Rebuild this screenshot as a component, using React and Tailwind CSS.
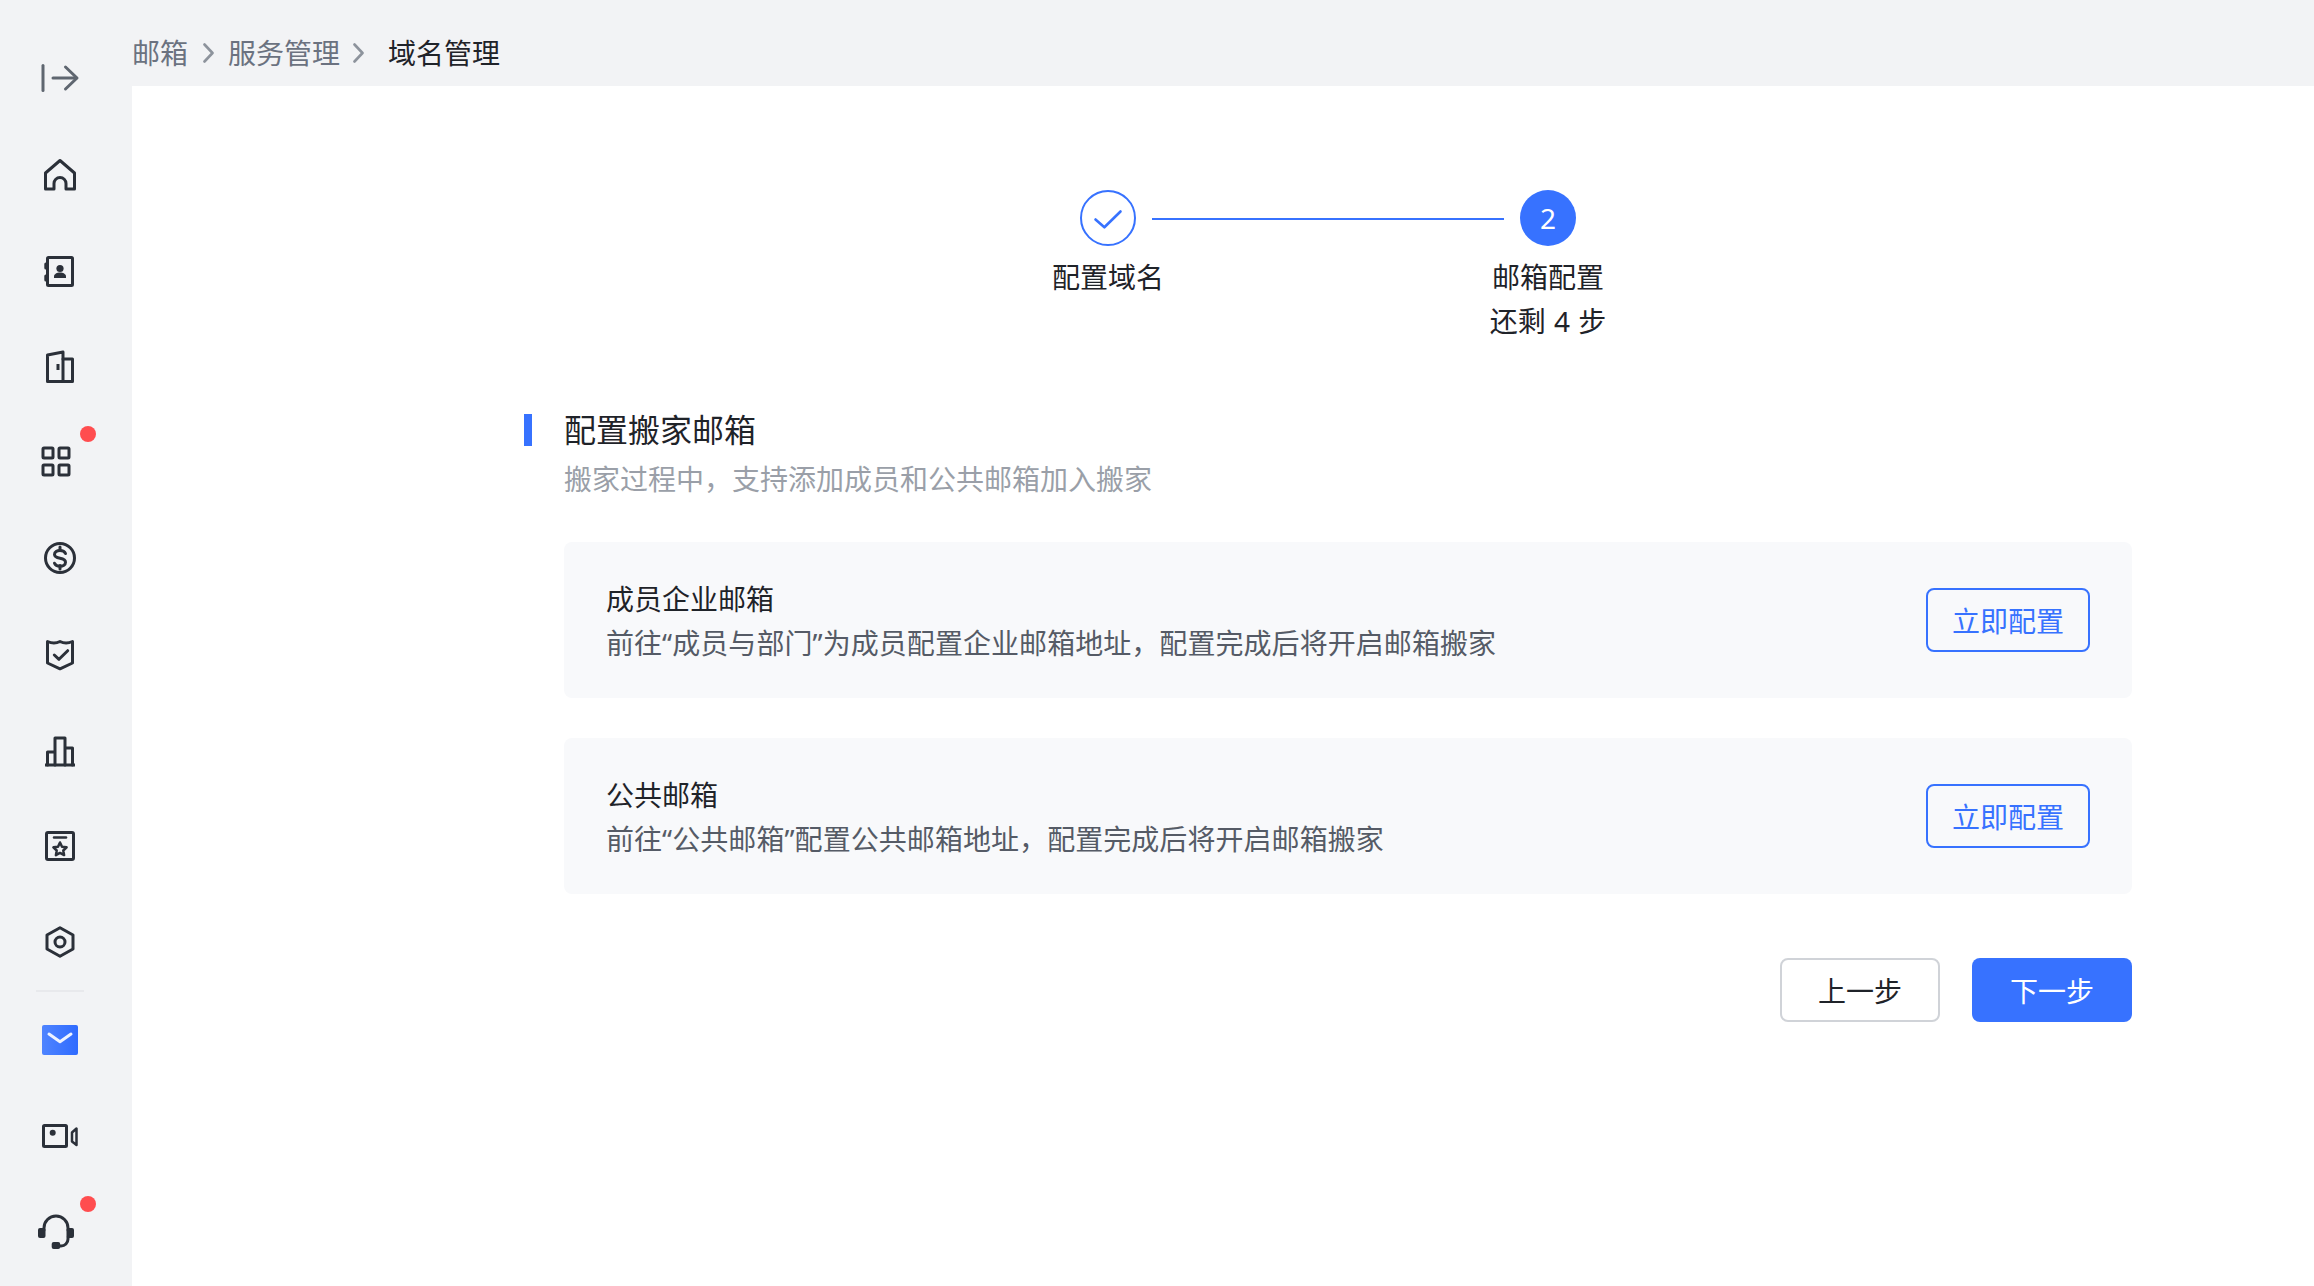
const stroke = {
  fill: "none",
  stroke: "#2b3039",
  strokeWidth: 3,
  strokeLinejoin: "round",
  strokeLinecap: "round",
};

function Ico({ children }) {
  return (
    <svg width="48" height="48" viewBox="0 0 48 48" className="block" {...stroke}>
      {children}
    </svg>
  );
}

const icons = {
  collapse: (
    <svg width="48" height="48" viewBox="0 0 48 48" className="block" fill="none" stroke="#5f6670" strokeWidth="3" strokeLinecap="round" strokeLinejoin="round">
      <path d="M7 11.500V36.500" />
      <path d="M17 24H40" />
      <path d="M29.500 13L41 24L29.500 35" />
    </svg>
  ),
  home: (
    <Ico>
      <path d="M9.500 23L24 10.500L38.500 23V39H30V33.500a6 6 0 0 0-12 0V39H9.500Z" />
    </Ico>
  ),
  contacts: (
    <Ico>
      <rect x="11.500" y="11.500" width="25" height="28" rx="1" />
      <path d="M9.800 18v4M9.800 30v4" />
      <circle cx="24" cy="22.500" r="3.600" fill="#2b3039" stroke="none" />
      <path d="M18 32v-1.500c0-2.500 3-4 6-4s6 1.500 6 4V32Z" fill="#2b3039" stroke="none" />
    </Ico>
  ),
  door: (
    <Ico>
      <path d="M11.500 13L27 10V39.500H11.500Z" />
      <path d="M27 17H36.500V39.500H27" />
      <rect x="20.500" y="22" width="3" height="6" fill="#2b3039" stroke="none" />
    </Ico>
  ),
  grid: (
    <Ico>
      <rect x="7" y="10" width="10" height="10" rx="1" />
      <rect x="23" y="10" width="10" height="10" rx="1" />
      <rect x="7" y="27" width="10" height="10" rx="1" />
      <rect x="23" y="27" width="10" height="10" rx="1" />
    </Ico>
  ),
  dollar: (
    <Ico>
      <circle cx="24" cy="24" r="14.500" />
      <path d="M29.500 19.500c-.8-2-2.800-3-5.500-3-3 0-5.500 1.500-5.500 4 0 2.700 2.500 3.200 5.500 3.700s5.500 1.300 5.500 4c0 2.600-2.500 4-5.500 4-2.700 0-4.700-1-5.500-3" />
      <path d="M24 13v3.500M24 31.500V35" />
    </Ico>
  ),
  shield: (
    <Ico>
      <path d="M11.500 11.500C16 13.500 20 13.500 24 11.500C28 13.500 32 13.500 36.500 11.500V33L24 38.800L11.500 33Z" />
      <path d="M18.300 25L23 29.300L31.700 20.700" />
    </Ico>
  ),
  bars: (
    <Ico>
      <path d="M9 39H39" strokeLinecap="butt" />
      <path d="M19 26H11.500V39M19 39V12H29V39M29 22H36.500V39" />
    </Ico>
  ),
  star: (
    <Ico>
      <rect x="10.500" y="10.500" width="27" height="27" rx="1.500" />
      <path d="M18 15.500H30" strokeWidth="2.500" />
      <path d="M24 20.500L26 24.700L30.600 25.300L27.300 28.500L28.100 33.100L24 30.900L19.900 33.100L20.700 28.500L17.400 25.300L22 24.700Z" strokeWidth="2.500" />
    </Ico>
  ),
  hex: (
    <Ico>
      <path d="M24 9.700L37 17V31L24 38.300L11 31V17Z" />
      <circle cx="24" cy="24" r="5" />
    </Ico>
  ),
  video: (
    <Ico>
      <rect x="7.500" y="13.500" width="23" height="21" rx="1" />
      <circle cx="16.700" cy="20.700" r="3" fill="#2b3039" stroke="none" />
      <path d="M36 20.500L40.500 16.500V33L36 29.500Z" strokeWidth="2.500" />
    </Ico>
  ),
  headset: (
    <Ico>
      <path d="M8 22V20a12 12 0 0 1 24 0V22" />
      <rect x="2" y="20" width="7.500" height="10" rx="2" fill="#2b3039" stroke="none" />
      <rect x="30.500" y="20" width="7.500" height="10" rx="2" fill="#2b3039" stroke="none" />
      <path d="M32 29V31a7 7 0 0 1-7 7H22" />
      <rect x="15.700" y="34" width="8.500" height="7" rx="2" fill="#2b3039" stroke="none" />
    </Ico>
  ),
};

function Row({ icon, dot }) {
  return (
    <div className="relative flex h-24 w-[120px] items-center justify-center">
      {icons[icon]}
      {dot && <span className="absolute left-20 top-3 h-4 w-4 rounded-full bg-[#ff4d4f]" />}
    </div>
  );
}

function Chevron({ className }) {
  return (
    <svg width="11" height="20" viewBox="0 0 11 20" className={className} fill="none" stroke="#8d939c" strokeWidth="2.600" strokeLinecap="round" strokeLinejoin="round">
      <path d="M1.500 1.500L9.500 10L1.500 18.500" />
    </svg>
  );
}

function Card({ title, desc }) {
  return (
    <div className="flex h-[156px] items-center justify-between rounded-lg bg-[#f8f9fb] px-[42px]">
      <div className="pt-[1px]">
        <div className="text-[28px] leading-[44px] text-[#1f2329]">{title}</div>
        <div className="text-[28px] leading-[44px] tracking-[0.06px] text-[#555b66]">{desc}</div>
      </div>
      <button className="h-16 w-[164px] rounded-lg border-2 border-[#3772ff] pt-[2px] text-[28px] text-[#3772ff]">立即配置</button>
    </div>
  );
}

export default function App() {
  return (
    <div className="flex h-screen w-screen overflow-hidden bg-[#f2f3f5] font-['Noto_Sans','Noto_Sans_CJK_SC',sans-serif]">
      <aside className="w-[132px] shrink-0 pt-[30px]">
        <Row icon="collapse" />
        <Row icon="home" />
        <Row icon="contacts" />
        <Row icon="door" />
        <Row icon="grid" dot />
        <Row icon="dollar" />
        <Row icon="shield" />
        <Row icon="bars" />
        <Row icon="star" />
        <Row icon="hex" />
        <div className="ml-9 h-[2px] w-12 bg-[#e8e9ec]" />
        <div className="flex h-24 w-[120px] items-center justify-center">
          <svg width="36" height="30" viewBox="0 0 36 30" className="block">
            <defs>
              <linearGradient id="mailg" x1="0" y1="0" x2="1" y2="0">
                <stop offset="0" stopColor="#4f84ff" />
                <stop offset="1" stopColor="#2f6bff" />
              </linearGradient>
            </defs>
            <rect width="36" height="30" rx="2" fill="url(#mailg)" />
            <path d="M7 9L18 16.700L29 9" fill="none" stroke="#eef3ff" strokeWidth="3" strokeLinecap="round" strokeLinejoin="round" />
          </svg>
        </div>
        <Row icon="video" />
        <Row icon="headset" dot />
      </aside>

      <main className="flex min-w-0 flex-1 flex-col">
        <nav className="flex h-[86px] shrink-0 items-start pt-[31px] text-[28px] leading-[44px]">
          <div className="flex h-[44px] items-center text-[#6b7280]">
            <span>邮箱</span>
            <Chevron className="ml-[15px]" />
            <span className="ml-[14px]">服务管理</span>
            <Chevron className="ml-[13px]" />
            <span className="ml-[24px] text-[#1f2329]">域名管理</span>
          </div>
        </nav>

        <section className="flex-1 bg-white pl-[392px] pt-[104px]">
          <div className="w-[1608px]">
            <div className="flex items-center justify-center gap-4">
              <div className="flex h-14 w-14 items-center justify-center rounded-full border-2 border-[#3772ff]">
                <svg width="52" height="52" viewBox="0 0 52 52" fill="none" stroke="#3772ff" strokeWidth="2.600" strokeLinecap="round" strokeLinejoin="round">
                  <path d="M13.500 27.500L22.400 35.300L38.500 19.500" />
                </svg>
              </div>
              <div className="mt-[2px] h-[2px] w-[352px] bg-[#3772ff]" />
              <div className="flex h-14 w-14 items-center justify-center rounded-full bg-[#3772ff] text-[28px] text-white">2</div>
            </div>
            <div className="mt-[9px] flex justify-center gap-[280px] text-center text-[28px] leading-[44px] text-[#1f2329]">
              <div className="w-40">配置域名</div>
              <div className="w-40">
                <div>邮箱配置</div>
                <div className="[word-spacing:1px]">还剩 4 步</div>
              </div>
            </div>

            <div className="mt-[71px] flex items-center">
              <span className="h-8 w-2 bg-[#3772ff]" />
              <h2 className="ml-8 text-[32px] font-normal leading-8 text-[#1f2329]">配置搬家邮箱</h2>
            </div>
            <div className="ml-10">
              <p className="mt-[11px] text-[28px] leading-[44px] text-[#9a9fa8]">搬家过程中，支持添加成员和公共邮箱加入搬家</p>
              <div className="mt-[41px] flex flex-col gap-10">
                <Card title="成员企业邮箱" desc="前往“成员与部门”为成员配置企业邮箱地址，配置完成后将开启邮箱搬家" />
                <Card title="公共邮箱" desc="前往“公共邮箱”配置公共邮箱地址，配置完成后将开启邮箱搬家" />
              </div>
              <div className="mt-16 flex justify-end gap-8">
                <button className="h-16 w-40 rounded-lg border-2 border-[#d0d3d8] bg-white pt-[2px] text-[28px] text-[#1f2329]">上一步</button>
                <button className="h-16 w-40 rounded-lg bg-[#3772ff] pt-[2px] text-[28px] text-white">下一步</button>
              </div>
            </div>
          </div>
        </section>
      </main>
    </div>
  );
}
